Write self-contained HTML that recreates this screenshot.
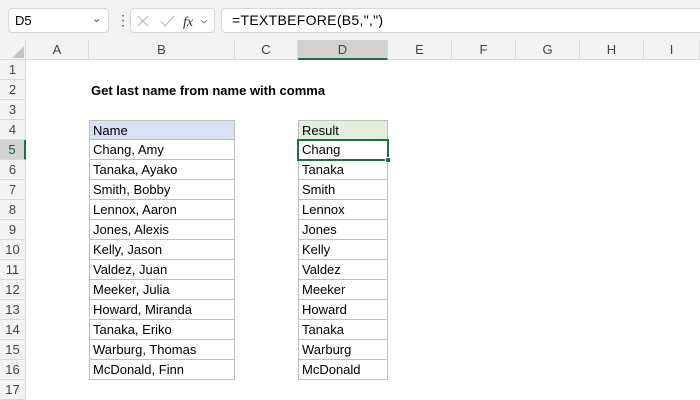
<!DOCTYPE html><html><head><style>
*{margin:0;padding:0;box-sizing:border-box}
body{width:700px;height:400px;overflow:hidden;background:#fff;font-family:"Liberation Sans",Calibri,sans-serif;position:relative}
.a{position:absolute}
.top{left:0;top:0;width:700px;height:40px;background:#f3f3f3}
.box{background:#fff;border:1px solid #d6d6d6;border-radius:4px}
.hdr{top:40px;height:20px;background:#f3f3f3;border-right:1px solid #d9d9d9;border-bottom:1px solid #d9d9d9;font-size:13px;color:#444;text-align:center;line-height:20px}
.rh{left:0;width:26px;height:20px;background:#f3f3f3;border-bottom:1px solid #d9d9d9;border-right:1px solid #d9d9d9;font-size:13px;color:#444;text-align:center;line-height:20px}
.c{height:20px;font-size:13px;line-height:20px;padding-left:3px;color:#000;border:1px solid #bfbfbf;margin-top:-1px}
</style></head><body>
<div class="a top"></div>
<div class="a box" style="left:8px;top:8px;width:101px;height:25px;font-size:13px;line-height:23px;padding-left:6px">D5<span style="position:absolute;left:83px;top:-1px;font-size:11px;color:#444">&#8964;</span></div>
<div class="a" style="left:116px;top:12px;font-size:14px;color:#555;line-height:16px">&#8942;</div>
<div class="a box" style="left:130px;top:8px;width:85px;height:25px"></div>
<svg class="a" style="left:135px;top:13px" width="80" height="16"><path d="M3 3l10 10M13 3L3 13" stroke="#bbb" stroke-width="1.2" fill="none"/><path d="M26 8l4 5 9-10" stroke="#bbb" stroke-width="1.2" fill="none"/><text x="48" y="13" font-family="Liberation Serif" font-style="italic" font-size="14" fill="#333">fx</text><path d="M66 7l3 3 3-3" stroke="#888" fill="none"/></svg>
<div class="a box" style="left:221px;top:8px;width:485px;height:25px;font-size:14px;line-height:23px;padding-left:10px;letter-spacing:.3px">=TEXTBEFORE(B5,",")</div>
<div class="a hdr" style="left:0;width:26px"></div>
<svg class="a" style="left:12px;top:46px" width="12" height="12"><path d="M12 0V12H0Z" fill="#c4c4c4"/></svg>
<div class="a hdr" style="left:26px;width:63px">A</div>
<div class="a hdr" style="left:89px;width:146px">B</div>
<div class="a hdr" style="left:235px;width:63px">C</div>
<div class="a hdr" style="left:298px;width:90px;background:#d2d2d2;border-bottom:2px solid #1e7145;color:#1e5c34">D</div>
<div class="a hdr" style="left:388px;width:64px">E</div>
<div class="a hdr" style="left:452px;width:64px">F</div>
<div class="a hdr" style="left:516px;width:64px">G</div>
<div class="a hdr" style="left:580px;width:64px">H</div>
<div class="a hdr" style="left:644px;width:56px">I</div>
<div id="rows"></div>
<div class="a" style="left:91px;top:82px;font-size:13px;font-weight:bold;line-height:18px">Get last name from name with comma</div>
<script>
var n=["Chang, Amy","Tanaka, Ayako","Smith, Bobby","Lennox, Aaron","Jones, Alexis","Kelly, Jason","Valdez, Juan","Meeker, Julia","Howard, Miranda","Tanaka, Eriko","Warburg, Thomas","McDonald, Finn"];
var h="";
for(var i=1;i<=17;i++){var t=60+(i-1)*20;h+='<div class="a rh" style="top:'+t+'px;'+(i==5?'background:#d2d2d2;color:#1e5c34;border-right:2px solid #1e7145':'')+'">'+i+'</div>';}
h+='<div class="a c" style="left:89px;top:120px;width:146px;background:#d9e1f2;margin-top:0">Name</div>';
h+='<div class="a c" style="left:298px;top:120px;width:90px;background:#e2efda;margin-top:0">Result</div>';
for(var i=0;i<12;i++){var t=140+i*20;h+='<div class="a c" style="left:89px;top:'+t+'px;width:146px;height:21px">'+n[i]+'</div>';h+='<div class="a c" style="left:298px;top:'+t+'px;width:90px;height:21px">'+n[i].split(",")[0]+'</div>';}
h+='<div class="a" style="left:297px;top:139px;width:92px;height:22px;border:2px solid #1e7145"></div><div class="a" style="left:385px;top:157px;width:6px;height:6px;background:#1e7145;border:1px solid #fff"></div>';
document.getElementById("rows").innerHTML=h;
</script>
</body></html>
